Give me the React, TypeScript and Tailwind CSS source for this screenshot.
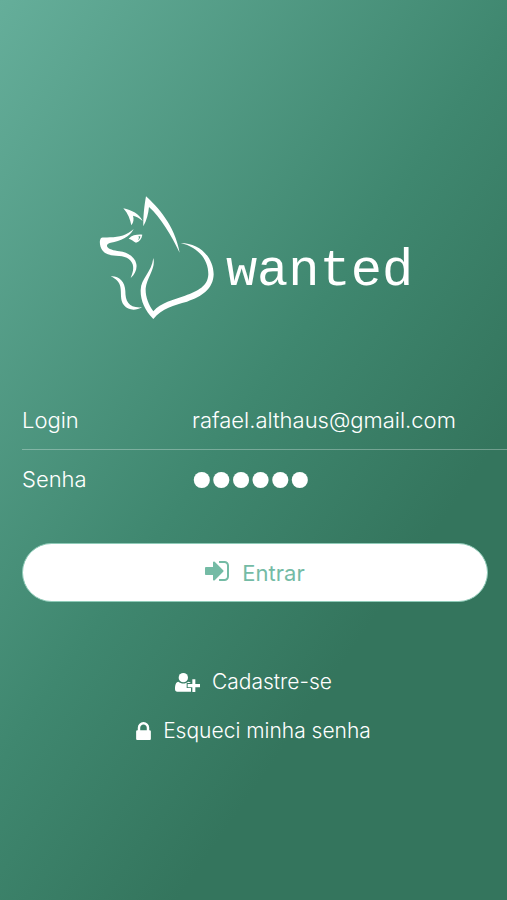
function FoxLogo() {
  return (
    <svg viewBox="27 33 345 369" className="h-[123px] w-[115px] shrink-0" fill="currentColor" aria-hidden="true">
      <path d="M131 132C112 150 88 157 60 157C48 158 38 157 33 159C27 167 29 185 37 196C45 208 60 211 78 212C104 213 122 219 128 238C132 252 128 264 122 279C135 268 142 252 139 237C135 215 112 202 88 199C72 197 54 193 51 184C50 178 54 175 62 173C92 168 118 157 131 132Z" />
      <path d="M100 70C125 75 148 87 158 108C147 98 139 94 129 92C132 102 131 112 124 121C121 104 114 86 100 70Z" />
      <path d="M168 34C202 65 254 120 269 203C244 152 213 98 177 66C175 86 170 106 160 124C159 98 163 60 168 34Z" />
      <path d="M272 174C326 174 370 214 371 268C370 311 336 335 291 350C251 361 217 369 190 402C164 376 151 345 152 315C153 280 185 262 190 219C198 250 171 275 167 310C166 335 175 358 190 379C212 352 250 345 285 332C324 319 354 303 355 268C355 221 322 186 272 174Z" />
      <path d="M62 274C86 272 105 289 106 318C106 349 116 370 156 367C138 377 115 377 102 361C89 343 95 325 91 305C87 290 80 283 62 274Z" />
      <path fillRule="evenodd" d="M116 161C127 150 141 148 157 149C155 162 148 170 138 173C130 169 125 163 116 161ZM145 154C148 157 147 162 143 166C149 163 151 158 151 154Z" />
    </svg>
  );
}

function SignInIcon() {
  return (
    <svg viewBox="0 0 1536 1280" className="mb-1 h-5 w-6" fill="currentColor" aria-hidden="true">
      <path d="M1184 640q0 26-19 45l-544 544q-19 19-45 19t-45-19-19-45V896H64q-26 0-45-19T0 832V448q0-26 19-45t45-19h448V96q0-26 19-45t45-19 45 19l544 544q19 19 19 45zm352-352v704q0 119-84.500 203.500T1248 1280H928q-13 0-22.500-9.500T896 1248q0-4-1-20t-.5-26.500 3-23.500 10-19.500T928 1152h320q66 0 113-47t47-113V288q0-66-47-113t-113-47H936l-11.500-1-11.500-3-8-5.500-7-9-2-13.500q0-4-1-20t-.5-26.500 3-23.500 10-19.500T928 0h320q119 0 203.500 84.500T1536 288z" />
    </svg>
  );
}

function UserPlusIcon() {
  return (
    <svg viewBox="0 0 75 57" className="h-[19px] w-[25px]" fill="currentColor" aria-hidden="true">
      <circle cx="25" cy="14" r="14" />
      <path d="M10 26C19 33 31 33 40 26C44 27 46 28 48 30H35V45H48V56H7Q0 56 0 48C0 35 3 27 10 26Z" />
      <path d="M52 19h9v14h14v10H61v14h-9V43H38V33h14z" />
    </svg>
  );
}

function LockIcon() {
  return (
    <svg viewBox="0 0 1152 1408" className="h-[18px] w-[15px]" fill="currentColor" aria-hidden="true">
      <path d="M320 640h512V448q0-106-75-181t-181-75-181 75-75 181v192zm832 96v576q0 40-28 68t-68 28H96q-40 0-68-28t-28-68V736q0-40 28-68t68-28h32V448q0-184 132-316T576 0t316 132 132 316v192h32q40 0 68 28t28 68z" />
    </svg>
  );
}

export default function App() {
  return (
    <main className="min-h-screen bg-[linear-gradient(125deg,#65ae9a_0%,#3f876f_47%,#34755d_71%,#34755d_100%)] pt-[196px] font-['Inter',sans-serif] text-[22px] leading-8 font-light text-white">
      <h1 className="flex items-center justify-center gap-3 pl-[5px]">
        <FoxLogo />
        <span className="pt-7 font-['Liberation_Mono',monospace] text-[52px] leading-none font-normal">wanted</span>
      </h1>

      <form onSubmit={(e) => e.preventDefault()} className="mt-[72px]">
        <div className="ml-[22px] flex h-[59px] items-center border-b border-white/30">
          <label htmlFor="login" className="w-[170px] shrink-0">Login</label>
          <input id="login" type="email" defaultValue="rafael.althaus@gmail.com" className="h-10 min-w-0 flex-1 bg-transparent outline-none" />
        </div>
        <div className="ml-[22px] flex h-[57px] items-center">
          <label htmlFor="senha" className="w-[170px] shrink-0">Senha</label>
          <input id="senha" type="password" defaultValue="123456" className="h-14 min-w-0 flex-1 bg-transparent font-['Liberation_Sans',sans-serif] text-[56px] font-bold outline-none" />
        </div>
        <div className="pt-9 pr-[19px] pl-[22px]">
          <button type="submit" className="flex h-[59px] w-full items-center justify-center gap-[13px] rounded-full border border-[#8fcbb8] bg-white font-normal text-[#74bba5]">
            <SignInIcon />
            Entrar
          </button>
        </div>
      </form>

      <nav className="flex flex-col items-center gap-[17px] pt-16 text-[21px]">
        <a href="#cadastro" className="flex items-center gap-3">
          <UserPlusIcon />
          Cadastre-se
        </a>
        <a href="#senha" className="flex items-center gap-3">
          <LockIcon />
          Esqueci minha senha
        </a>
      </nav>
    </main>
  );
}
